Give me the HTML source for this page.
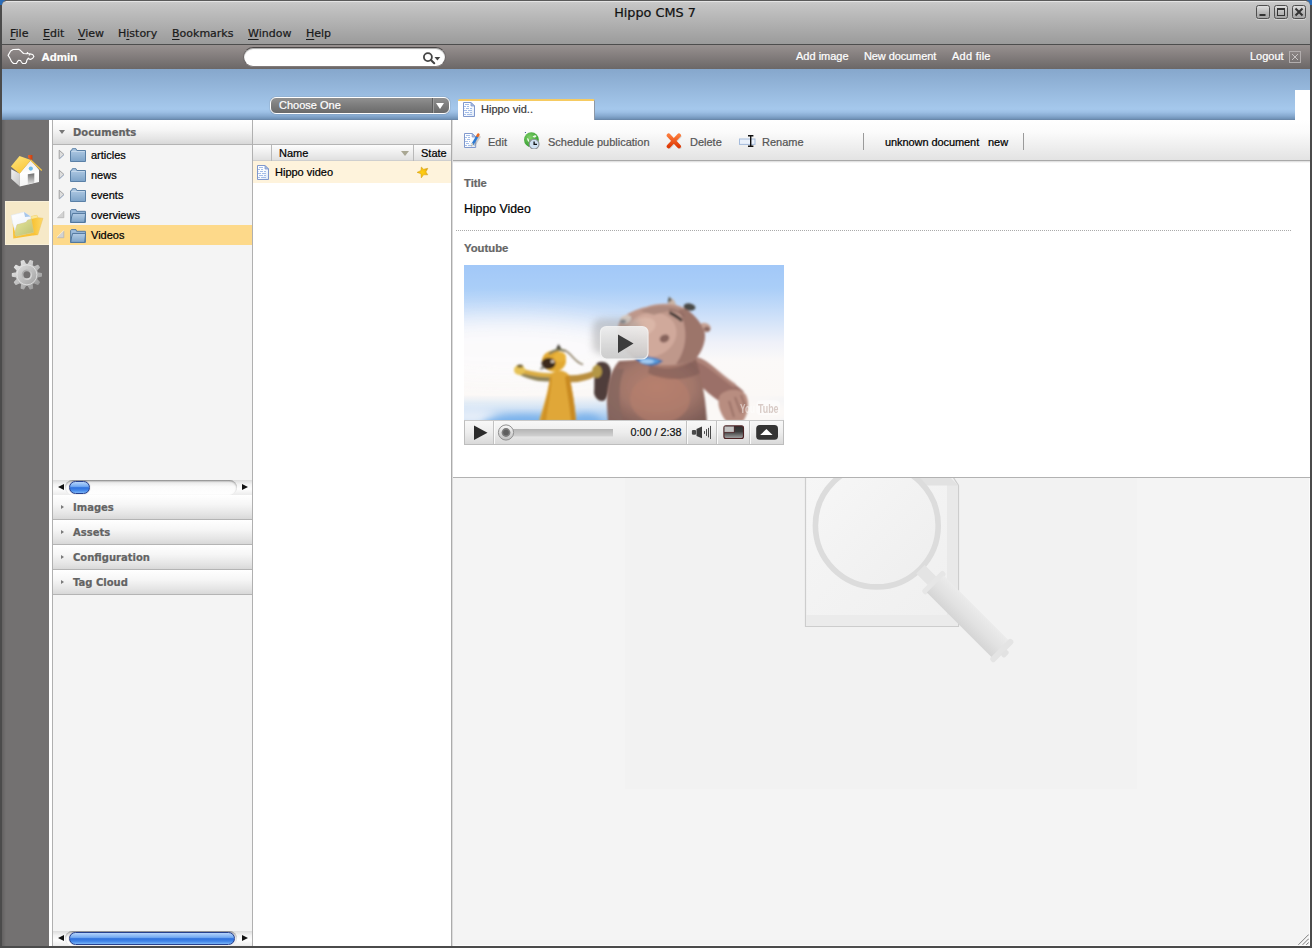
<!DOCTYPE html>
<html>
<head>
<meta charset="utf-8">
<title>Hippo CMS 7</title>
<style>
*{box-sizing:border-box;margin:0;padding:0}
html,body{width:1312px;height:948px;overflow:hidden;background:#4a4a4a}
body{position:relative;font-family:"Liberation Sans",sans-serif;font-size:11px;color:#000}
.abs{position:absolute}
.t{position:absolute;white-space:nowrap;line-height:14px;-webkit-text-stroke:.22px}
#win{position:absolute;left:0;top:0;width:1312px;height:948px;background:#4b4b4b;overflow:hidden}
#corner-l{position:absolute;left:0;top:0;width:5px;height:5px;background:#2a6cb8}
#corner-r{position:absolute;right:0;top:0;width:5px;height:5px;background:#2a6cb8}
#titlebar{position:absolute;left:2px;top:0;width:1308px;height:44px;border-radius:5px 5px 0 0;border-top:1px solid #5a5a5a;background:linear-gradient(#cdcdcd 0,#c4c4c4 4px,#9b9b9b 100%)}
#titlebar .hl{position:absolute;left:4px;right:4px;top:0;height:1px;background:#e4e4e4}
#title{left:-1px;width:1308px;text-align:center;top:4px;font:12.8px "DejaVu Sans",sans-serif;line-height:16px;color:#111}
.menu{font:11px "DejaVu Sans",sans-serif;color:#1a1a1a;top:26px;line-height:14px}
.menu u{text-decoration:underline;text-underline-offset:1.5px;text-decoration-thickness:.8px}
#tbline{position:absolute;left:2px;top:44px;width:1308px;height:1px;background:#4d4d4d}
#toolbar{position:absolute;left:2px;top:45px;width:1308px;height:24px;background:linear-gradient(#989190,#6b6767)}
#toolbar .t{color:#fff;top:4px}
#blue{position:absolute;left:2px;top:69px;width:1308px;height:51px;background:linear-gradient(#86a7cc 0,#a5c8ec 40px,#9dc0e5 43px,#86a9cf 47px,#6f91b6 50px,#66809f 51px)}
#sidebar{position:absolute;left:2px;top:120px;width:47px;height:826px;background:linear-gradient(to right,#636161 0,#6f6d6d 3px,#737171 4px)}
#gap{position:absolute;left:49px;top:120px;width:3px;height:826px;background:#fff}

.hdr{position:absolute;left:53px;width:199px;height:25px;border-bottom:1px solid #b4b4b4;background:linear-gradient(#ffffff 0,#f6f6f6 40%,#e4e4e4 80%,#d8d8d8 100%)}
.hdr .t{left:20px;top:7px;font:bold 10px "DejaVu Sans",sans-serif;line-height:12px;color:#636363}
.hdr .tri{position:absolute;left:8px;top:9.5px;width:0;height:0;border-left:3.5px solid #7a7a7a;border-top:2.7px solid transparent;border-bottom:2.7px solid transparent}
.hdr .trid{position:absolute;left:6px;top:10px;width:0;height:0;border-top:4px solid #777;border-left:3.5px solid transparent;border-right:3.5px solid transparent}
#leftpanel{position:absolute;left:52px;top:120px;width:201px;height:826px;background:#f4f4f4;border-left:1px solid #b0b0b0;border-right:1px solid #b0b0b0}
.row{position:absolute;left:53px;width:199px;height:20px}
.row .t{left:38px;top:3px}
.row svg{position:absolute}
#list{position:absolute;left:253px;top:120px;width:198px;height:826px;background:#fff}
#listhdr{position:absolute;left:0;top:0;width:198px;height:25px;border-bottom:1px solid #b4b4b4;background:linear-gradient(#ffffff 0,#f5f5f5 45%,#e3e3e3 100%)}
#colhdr{position:absolute;left:0;top:25px;width:198px;height:16px;background:linear-gradient(#fdfdfd,#ececec 60%,#e0e0e0);border-bottom:1px solid #cfcfcf}
#colhdr .sep{position:absolute;top:0;width:1px;height:16px;background:#b9b9b9}
#listrow{position:absolute;left:0;top:41px;width:198px;height:22px;background:#fef3dc}
#listborder{position:absolute;left:451px;top:120px;width:1px;height:826px;background:#ababab}
#right{position:absolute;left:452px;top:120px;width:858px;height:826px;background:#f4f4f4;border-left:1px solid #dcdcdc}
#rtool{position:absolute;left:0;top:0;width:857px;height:41px;background:linear-gradient(#ffffff 0,#fbfbfb 30%,#e3e3e3 100%);border-bottom:1px solid #a9a9a9}
#rtool .t{top:15px;color:#555}
#rtool .k{color:#000}
#rtool .vsep{position:absolute;top:13px;width:1px;height:17px;background:#9a9a9a}
#content{position:absolute;left:0;top:41px;width:857px;height:317px;background:linear-gradient(#d8d8d8 0,#fff 2px,#fff 100%);border-bottom:1px solid #b2b2b2}

.wbtn{position:absolute;top:4px;width:14px;height:14px;border:1px solid #4f4f4f;border-radius:2.5px;background:linear-gradient(#dedede,#b8b8b8 55%,#a4a4a4);box-shadow:0 1px 0 rgba(255,255,255,.45)}
.wbtn svg{position:absolute;left:0;top:0}
#search{position:absolute;left:241px;top:1.5px;width:203px;height:20.500px;border-radius:10.500px;background:#fff;border:1px solid #6a6565;border-top-color:#4a4646;border-bottom-color:#807b7b;box-shadow:inset 0 1px 1px rgba(0,0,0,.35)}
#lx{position:absolute;left:1287px;top:6px;width:12px;height:12px;border:1px solid #b2adad}
#dd{position:absolute;left:270px;top:97px;width:180px;height:17px;border:1px solid #fff;border-radius:6px;background:linear-gradient(#909090,#7c7c7c 50%,#6a6a6a);box-shadow:0 0 1px rgba(60,60,60,.8)}
#dd .t{left:8px;top:0px;color:#fff;font-size:11px}
#dd .s{position:absolute;left:161px;top:0;width:1px;height:15px;background:#5e5e5e;border-right:1px solid #9a9a9a;box-sizing:content-box}
#dd .a{position:absolute;left:165px;top:5px;width:0;height:0;border-top:6px solid #fff;border-left:4.5px solid transparent;border-right:4.5px solid transparent}
#tab{position:absolute;left:458px;top:99px;width:137px;height:22px;background:#fff;border-top:2px solid #f6cb62;border-right:1px solid #8d98a6;border-radius:2px 2px 0 0}
#tab .t{left:23px;top:1px;color:#3c3c3c}
#wblock{position:absolute;left:1295px;top:90px;width:15px;height:30px;background:#fff}

.sb{position:absolute;left:53px;width:199px;height:15px;background:linear-gradient(#dcdcdc 0,#f4f4f4 30%,#fdfdfd 60%,#ececec 100%)}
.sb .track{position:absolute;left:12px;top:0;width:172px;height:15px;border-radius:8px;background:linear-gradient(#c9c9c9 0,#ececec 18%,#fbfbfb 45%,#ffffff 100%);box-shadow:inset 0 1px 2px rgba(0,0,0,.35)}
.sb .thumb{position:absolute;top:1px;height:13px;border-radius:7px;border:1px solid #27418f;background:linear-gradient(#b6d4fb 0,#74aaf2 40%,#2f70dd 52%,#4386e8 75%,#79b4f7 100%);box-shadow:0 0 1px rgba(0,0,50,.5)}
.sb .al{position:absolute;left:5px;top:4px;width:0;height:0;border-right:6px solid #111;border-top:3.5px solid transparent;border-bottom:3.5px solid transparent}
.sb .ar{position:absolute;left:189px;top:4px;width:0;height:0;border-left:6px solid #111;border-top:3.5px solid transparent;border-bottom:3.5px solid transparent}
#sel{position:absolute;left:5px;top:201px;width:44px;height:44px;background:#f6e9c8;border:1px solid #f9f0d8;border-right:none}
.ico{position:absolute}

#video{position:absolute;left:11px;top:104px;width:320px;height:155px;overflow:hidden}
#vbar{position:absolute;left:11px;top:259px;width:320px;height:25px;border:1px solid #bdbdbd;border-top:1px solid #c9c9c9;background:linear-gradient(#f8f8f8,#ededed 50%,#d9d9d9)}
#vbar .vs{position:absolute;top:0;width:1px;height:23px;background:#c2c2c2;border-right:1px solid #fafafa;box-sizing:content-box}
#vbar .t{font-size:10.8px;top:4px;left:165.5px;color:#111}
#wm{position:absolute;left:172px;top:358px;width:512px;height:311px;background:#f2f2f2;overflow:hidden}
</style>
</head>
<body>
<div id="win">
<div id="corner-l"></div><div id="corner-r"></div>
<div id="titlebar"><div class="hl"></div>
 <div id="title" class="t">Hippo CMS 7</div>
 <div class="wbtn" style="left:1254px"><svg width="12" height="12" viewBox="0 0 12 12"><rect x="2.5" y="8" width="6" height="2" fill="#333"/></svg></div>
 <div class="wbtn" style="left:1272px"><svg width="12" height="12" viewBox="0 0 12 12"><rect x="2.5" y="2.5" width="7" height="7" fill="none" stroke="#333" stroke-width="1"/><rect x="2" y="2" width="8" height="2" fill="#333"/></svg></div>
 <div class="wbtn" style="left:1290px"><svg width="12" height="12" viewBox="0 0 12 12"><path d="M2.5 2.5 L9.5 9.5 M9.5 2.5 L2.5 9.5" stroke="#333" stroke-width="2"/></svg></div>
 <div class="t menu" style="left:8px"><u>F</u>ile</div>
 <div class="t menu" style="left:41px"><u>E</u>dit</div>
 <div class="t menu" style="left:76px"><u>V</u>iew</div>
 <div class="t menu" style="left:116px">H<u>i</u>story</div>
 <div class="t menu" style="left:170px"><u>B</u>ookmarks</div>
 <div class="t menu" style="left:246px"><u>W</u>indow</div>
 <div class="t menu" style="left:304px"><u>H</u>elp</div>
</div>
<div id="tbline"></div>
<div id="toolbar">
 <svg class="ico" style="left:2px;top:-1px" width="40" height="26" viewBox="0 0 40 26"><path d="M4.1 11.4 L6.6 7.0 L9.1 5.5 L14.6 5.3 L16.6 6.6 L19.5 9.5 L22.9 9.8 L23.5 8.5 L24.1 9.8 L25.9 9.9 L28.7 10.5 L29.9 12.5 L28.7 14.3 L26.5 15.4 L25.0 14.9 L24.4 14.2 L22.9 16.2 L22.4 18.3 L21.3 19.5 L18.6 19.5 L17.4 18.0 L16.5 16.5 L14.6 16.3 L13.4 17.7 L12.5 19.4 L9.5 19.5 L7.6 17.7 L5.8 14.0 Z" fill="none" stroke="#fff" stroke-width="1.15" stroke-linejoin="round"/><path d="M25.9 10 L25.2 11.6" stroke="#fff" stroke-width="1" fill="none"/></svg><div class="t" style="left:39.5px;top:4.5px;font-weight:bold;font-size:11.5px">Admin</div>
 <div class="t" style="left:794px">Add image</div>
 <div class="t" style="left:862px;letter-spacing:-.1px">New document</div>
 <div class="t" style="left:950px;letter-spacing:.25px">Add file</div>
 <div class="t" style="left:1248px">Logout</div>
 <div id="lx"><svg width="10" height="10" viewBox="0 0 10 10" style="position:absolute;left:0;top:0"><path d="M2 2 L8 8 M8 2 L2 8" stroke="#c8c4c4" stroke-width="1"/></svg></div>
 <div id="search"><svg width="24" height="17" viewBox="0 0 24 17" style="position:absolute;left:176px;top:1px"><circle cx="7.900" cy="8.100" r="4" fill="none" stroke="#444" stroke-width="1.800"/><path d="M10.900 11.100 L14.200 14.200" stroke="#444" stroke-width="2.100" stroke-linecap="round"/><path d="M14.500 8.100 L20.300 8.100 L17.400 11.400 Z" fill="#444"/></svg></div>
</div>
<div id="blue"></div>
<div id="wblock"></div>
<div id="dd"><div class="t">Choose One</div><div class="s"></div><div class="a"></div></div>
<div id="tab"><svg class="ico" style="left:5px;top:1px" width="12" height="15" viewBox="0 0 12 15"><path d="M0.5 0.5 L8 0.5 L11.5 4 L11.5 14.5 L0.5 14.5 Z" fill="url(#dg)" stroke="#8098cc" stroke-width="1"/><path d="M8 0.5 L8 4 L11.5 4 Z" fill="#a9c0e6" stroke="#8098cc" stroke-width=".8"/><path d="M2 2.5 H6 M1 4.500 H3 M4 4.500 H6 M1 6.500 H1.500 M3 6.500 H6 M7 6.500 H9 M1 8.500 H4 M5 8.500 H9 M2 10.500 H6 M7 10.500 H9 M1 12.500 H3 M4 12.500 H9" stroke="#a4bde8" stroke-width="1"/></svg><div class="t">Hippo vid..</div></div>
<div id="sidebar"></div><div id="sel"></div><svg class="ico" style="left:0;top:145px" width="56" height="56" viewBox="0 0 56 56"><defs>
<linearGradient id="hr" x1="0" y1="0" x2=".6" y2="1"><stop offset="0" stop-color="#ffe680"/><stop offset="1" stop-color="#f9c63a"/></linearGradient>
<linearGradient id="hl" x1="0" y1="0" x2="1" y2="1"><stop offset="0" stop-color="#f2f2f2"/><stop offset="1" stop-color="#c4c4c4"/></linearGradient>
<linearGradient id="hf" x1="0" y1="0" x2="0" y2="1"><stop offset="0" stop-color="#ececec"/><stop offset=".5" stop-color="#ffffff"/><stop offset="1" stop-color="#f4f4f4"/></linearGradient>
<linearGradient id="hd" x1="0" y1="0" x2="0" y2="1"><stop offset="0" stop-color="#6e6e6e"/><stop offset="1" stop-color="#e2e2e2"/></linearGradient>
<linearGradient id="hc" x1="0" y1="0" x2="1" y2="0"><stop offset="0" stop-color="#f0642a"/><stop offset="1" stop-color="#c93c0c"/></linearGradient>
</defs>
<path d="M28.2 10 L32.4 10 L32.4 15.2 L28.2 13 Z" fill="url(#hc)"/>
<path d="M11.2 24.3 L19.5 28.4 L19.8 41.4 L11.2 33.8 Z" fill="url(#hl)"/>
<path d="M19.5 28.6 L30.7 15.3 L39 24.8 L39 36.9 L19.8 41.4 Z" fill="url(#hf)"/>
<path d="M10.9 21.6 L19.5 10.9 L30.9 15 L19.6 28.8 Z" fill="url(#hr)"/>
<path d="M30.6 15 L41.8 25.6" stroke="#f2c444" stroke-width="1.4" fill="none"/>
<circle cx="30.8" cy="23.6" r="2.1" fill="#6cbcea"/>
<path d="M27.8 29.3 L34.3 28.2 L34.3 37.8 L27.8 39.3 Z" fill="url(#hd)"/>
</svg><svg class="ico" style="left:0;top:197px" width="56" height="56" viewBox="0 0 56 56"><defs>
<linearGradient id="bp" x1="0" y1="0" x2="1" y2="1"><stop offset="0" stop-color="#ffffff"/><stop offset=".6" stop-color="#f4f7fc"/><stop offset="1" stop-color="#c7d8ee"/></linearGradient>
<linearGradient id="bf" x1="0" y1="0" x2="1" y2="1"><stop offset="0" stop-color="#e6e69a"/><stop offset="1" stop-color="#bcc074"/></linearGradient>
<linearGradient id="by" x1="0" y1="0" x2="1" y2="0"><stop offset="0" stop-color="#f7bf2c"/><stop offset="1" stop-color="#fdd866"/></linearGradient>
</defs>
<path d="M30.7 19.6 L36.9 18.3 L37.8 20.7 L42.9 21.3 L37.8 37.8 L33 37.8 Z" fill="url(#by)" stroke="#efc660" stroke-width=".6"/>
<path d="M30.9 19.5 L36.9 18.3 L37.6 20.6 L31.5 22 Z" fill="#f9e79a"/>
<path d="M12.7 26 L13.3 41.6 L37.8 37.8 L33.6 35.4 L16 39.3 Z" fill="#f9c338"/>
<path d="M11.2 18.3 L23.9 15.1 L30.7 19.5 L30.7 23 L26 25.4 L17.1 27.8 L14.8 33.1 L12.9 27 Z" fill="url(#bp)" stroke="#dbe5f2" stroke-width=".5"/>
<path d="M23.9 15.1 L30.7 19.5 L25.1 20.1 Z" fill="#a7c6ea"/>
<path d="M17.1 27.8 L26 25.4 L27.8 23 L31.3 22.4 L33.7 35.4 L16 39.3 L14.8 36.6 Z" fill="url(#bf)" stroke="#d9c987" stroke-width=".6"/>
</svg><svg class="ico" style="left:0;top:247px" width="56" height="56" viewBox="0 0 56 56"><defs>
<linearGradient id="gg" x1="0" y1="0" x2="1" y2="1"><stop offset="0" stop-color="#f0f0f0"/><stop offset="1" stop-color="#8e8e8e"/></linearGradient>
<linearGradient id="gg2" x1="0" y1="0" x2="1" y2="1"><stop offset="0" stop-color="#dcdcdc"/><stop offset="1" stop-color="#a2a2a2"/></linearGradient>
<linearGradient id="gg3" x1="0" y1="0" x2="1" y2="1"><stop offset="0" stop-color="#9c9c9c"/><stop offset="1" stop-color="#e8e8e8"/></linearGradient>
</defs>
<path d="M28.21 17.28 L30.19 13.68 L32.54 14.44 L32.02 18.52 L34.14 20.06 L37.86 18.31 L39.31 20.30 L36.50 23.30 L37.31 25.80 L41.35 26.57 L41.35 29.03 L37.31 29.80 L36.50 32.30 L39.31 35.30 L37.86 37.29 L34.14 35.54 L32.02 37.08 L32.54 41.16 L30.19 41.92 L28.21 38.32 L25.59 38.32 L23.61 41.92 L21.26 41.16 L21.78 37.08 L19.66 35.54 L15.94 37.29 L14.49 35.30 L17.30 32.30 L16.49 29.80 L12.45 29.03 L12.45 26.57 L16.49 25.80 L17.30 23.30 L14.49 20.30 L15.94 18.31 L19.66 20.06 L21.78 18.52 L21.26 14.44 L23.61 13.68 L25.59 17.28 Z" fill="url(#gg)" stroke="url(#gg)" stroke-width="1.3" stroke-linejoin="round"/>
<circle cx="26.9" cy="27.8" r="10" fill="url(#gg2)" stroke="#e6e6e6" stroke-width=".8"/>
<circle cx="26.9" cy="27.8" r="5.2" fill="url(#gg3)"/>
<circle cx="26.9" cy="27.8" r="3.5" fill="#737171"/>
</svg>
<div id="gap"></div>

<div id="leftpanel"></div>
<div class="hdr" style="top:120px"><div class="trid"></div><div class="t">Documents</div></div>
<div class="row" style="top:145px"><svg class="ico" style="left:5px;top:4px" width="8" height="11" viewBox="0 0 8 11"><path d="M1.2 1.2 L6 5.5 L1.2 9.8 Z" fill="#dedede" stroke="#a2a2a2" stroke-width="1"/><path d="M6 5.8 L1.6 10" stroke="#a9c0e2" stroke-width=".8" fill="none"/></svg><svg class="ico" style="left:17px;top:3px" width="16" height="14" viewBox="0 0 16 14"><defs><linearGradient id="fg" x1="0" y1="0" x2="0" y2="1"><stop offset="0" stop-color="#b4cde6"/><stop offset="1" stop-color="#7da3c8"/></linearGradient></defs><path d="M1.5 2.8 L2.3 0.7 L6 0.7 L6.8 2.5 L15.5 2.5 L15.5 13.5 L0.5 13.5 L0.5 2.8 Z" fill="url(#fg)" stroke="#5a80a6" stroke-width="1"/><path d="M1.3 3.5 L14.7 3.5" stroke="#cfe0f0" stroke-width="1" opacity=".7"/></svg><div class="t">articles</div></div>
<div class="row" style="top:165px"><svg class="ico" style="left:5px;top:4px" width="8" height="11" viewBox="0 0 8 11"><path d="M1.2 1.2 L6 5.5 L1.2 9.8 Z" fill="#dedede" stroke="#a2a2a2" stroke-width="1"/><path d="M6 5.8 L1.6 10" stroke="#a9c0e2" stroke-width=".8" fill="none"/></svg><svg class="ico" style="left:17px;top:3px" width="16" height="14" viewBox="0 0 16 14"><defs><linearGradient id="fg" x1="0" y1="0" x2="0" y2="1"><stop offset="0" stop-color="#b4cde6"/><stop offset="1" stop-color="#7da3c8"/></linearGradient></defs><path d="M1.5 2.8 L2.3 0.7 L6 0.7 L6.8 2.5 L15.5 2.5 L15.5 13.5 L0.5 13.5 L0.5 2.8 Z" fill="url(#fg)" stroke="#5a80a6" stroke-width="1"/><path d="M1.3 3.5 L14.7 3.5" stroke="#cfe0f0" stroke-width="1" opacity=".7"/></svg><div class="t">news</div></div>
<div class="row" style="top:185px"><svg class="ico" style="left:5px;top:4px" width="8" height="11" viewBox="0 0 8 11"><path d="M1.2 1.2 L6 5.5 L1.2 9.8 Z" fill="#dedede" stroke="#a2a2a2" stroke-width="1"/><path d="M6 5.8 L1.6 10" stroke="#a9c0e2" stroke-width=".8" fill="none"/></svg><svg class="ico" style="left:17px;top:3px" width="16" height="14" viewBox="0 0 16 14"><defs><linearGradient id="fg" x1="0" y1="0" x2="0" y2="1"><stop offset="0" stop-color="#b4cde6"/><stop offset="1" stop-color="#7da3c8"/></linearGradient></defs><path d="M1.5 2.8 L2.3 0.7 L6 0.7 L6.8 2.5 L15.5 2.5 L15.5 13.5 L0.5 13.5 L0.5 2.8 Z" fill="url(#fg)" stroke="#5a80a6" stroke-width="1"/><path d="M1.3 3.5 L14.7 3.5" stroke="#cfe0f0" stroke-width="1" opacity=".7"/></svg><div class="t">events</div></div>
<div class="row" style="top:205px"><svg class="ico" style="left:3px;top:5px" width="9" height="9" viewBox="0 0 9 9"><path d="M1.2 7.7 L7.8 1.2 L7.8 7.7 Z" fill="#d2d2d2" stroke="#b4b4b4" stroke-width=".8"/><path d="M1 7.4 L7.6 0.9" stroke="#fff" stroke-width=".9" opacity=".9"/></svg><svg class="ico" style="left:17px;top:4px" width="16" height="14" viewBox="0 0 16 14"><path d="M1.3 0.6 L6 0.6 L6.6 2.3 L15.4 2.3 L15.4 13.4 L0.6 13.4 L0.6 1.5 Z" fill="#9dbcdc" stroke="#557ba2" stroke-width="1"/><path d="M2.6 4.4 L15.6 4.4 L14.7 13.4 L0.7 13.4 L1.6 8 Z" fill="url(#fg)" stroke="#4f759c" stroke-width="1"/></svg><div class="t">overviews</div></div>
<div class="row" style="top:225px;background:#fdd98a"><svg class="ico" style="left:3px;top:5px" width="9" height="9" viewBox="0 0 9 9"><path d="M1.2 7.7 L7.8 1.2 L7.8 7.7 Z" fill="#d2d2d2" stroke="#b4b4b4" stroke-width=".8"/><path d="M1 7.4 L7.6 0.9" stroke="#fff" stroke-width=".9" opacity=".9"/></svg><svg class="ico" style="left:17px;top:4px" width="16" height="14" viewBox="0 0 16 14"><path d="M1.3 0.6 L6 0.6 L6.6 2.3 L15.4 2.3 L15.4 13.4 L0.6 13.4 L0.6 1.5 Z" fill="#9dbcdc" stroke="#557ba2" stroke-width="1"/><path d="M2.6 4.4 L15.6 4.4 L14.7 13.4 L0.7 13.4 L1.6 8 Z" fill="url(#fg)" stroke="#4f759c" stroke-width="1"/></svg><div class="t">Videos</div></div>
<div class="hdr" style="top:495px"><div class="tri"></div><div class="t">Images</div></div>
<div class="hdr" style="top:520px"><div class="tri"></div><div class="t">Assets</div></div>
<div class="hdr" style="top:545px"><div class="tri"></div><div class="t">Configuration</div></div>
<div class="hdr" style="top:570px"><div class="tri"></div><div class="t">Tag Cloud</div></div>
<div class="sb" style="top:480px"><div class="track"></div><div class="al"></div><div class="ar"></div><div class="thumb" style="left:16px;width:21px"></div></div>
<div class="sb" style="top:931px"><div class="track"></div><div class="al"></div><div class="ar"></div><div class="thumb" style="left:16px;width:166px"></div></div>
<div id="list">
 <div id="listhdr"></div>
 <div id="colhdr"><div class="abs" style="left:148px;top:6px;width:0;height:0;border-top:5px solid #a9a793;border-left:4.5px solid transparent;border-right:4.5px solid transparent"></div><div class="sep" style="left:18px"></div><div class="sep" style="left:160px"></div>
  <div class="t" style="left:26px;top:1px">Name</div><div class="t" style="left:168px;top:1px">State</div></div>
 <div id="listrow"><svg width="0" height="0" style="position:absolute"><defs><linearGradient id="dg" x1="0" y1="0" x2="1" y2="1"><stop offset="0" stop-color="#ffffff"/><stop offset=".5" stop-color="#fbfdff"/><stop offset="1" stop-color="#dbe7f7"/></linearGradient></defs></svg><svg class="ico" style="left:4px;top:4px" width="12" height="15" viewBox="0 0 12 15"><path d="M0.5 0.5 L8 0.5 L11.5 4 L11.5 14.5 L0.5 14.5 Z" fill="url(#dg)" stroke="#8098cc" stroke-width="1"/><path d="M8 0.5 L8 4 L11.5 4 Z" fill="#a9c0e6" stroke="#8098cc" stroke-width=".8"/><path d="M2 2.5 H6 M1 4.500 H3 M4 4.500 H6 M1 6.500 H1.500 M3 6.500 H6 M7 6.500 H9 M1 8.500 H4 M5 8.500 H9 M2 10.500 H6 M7 10.500 H9 M1 12.500 H3 M4 12.500 H9" stroke="#a4bde8" stroke-width="1"/></svg><svg class="ico" style="left:162px;top:5px" width="14" height="13" viewBox="0 0 14 13"><defs><radialGradient id="sg" cx=".5" cy=".5" r=".55"><stop offset="0" stop-color="#ffcf14"/><stop offset=".55" stop-color="#f7c010"/><stop offset="1" stop-color="#cf9a12"/></radialGradient></defs><path d="M6.3 1 L8.6 3.2 L12.9 2.3 L10.9 5.9 L12.8 8.8 L8.6 8.8 L6.3 11.9 L5.9 7.7 L2 6.4 L5.9 4.5 Z" fill="url(#sg)" stroke="#d9a514" stroke-width=".5"/></svg><div class="t" style="left:22px;top:4px">Hippo video</div></div>
</div>
<div id="listborder"></div>
<div id="right">
 <div id="rtool">
  <svg class="ico" style="left:11px;top:11px" width="17" height="18" viewBox="0 0 17 18"><g transform="translate(0,2)"><path d="M0.5 0.500 L8.200 0.500 L11.700 4 L11.700 14.500 L0.500 14.500 Z" fill="url(#dg)" stroke="#8098cc" stroke-width="1"/><path d="M8.200 0.500 L8.200 4 L11.700 4 Z" fill="#a9c0e6" stroke="#8098cc" stroke-width=".8"/><path d="M2 2.500 H6 M1 4.500 H3 M4 4.500 H6 M1 6.500 H1.500 M3 6.500 H6 M1 8.500 H4 M5 8.500 H6 M2 10.500 H5 M1 12.500 H3 M4 12.500 H7" stroke="#a4bde8" stroke-width="1"/></g><path d="M14.900 4.300 L9 14" stroke="#8e8e8e" stroke-width="2.200" opacity=".4" transform="translate(1.100,.8)"/><path d="M13.500 5.200 L8.500 13.300" stroke="#2a79d2" stroke-width="2.500"/><path d="M14.300 3.700 L13.600 4.900" stroke="#ea6a22" stroke-width="2.700" stroke-linecap="round"/><path d="M9.400 12.300 L7.300 15.300 L7.800 12.200 Z" fill="#ecd6a8"/><path d="M7.900 14.200 L7.100 15.600 L8.400 14.700 Z" fill="#222"/></svg><svg class="ico" style="left:70px;top:11px" width="18" height="18" viewBox="0 0 18 18"><defs><radialGradient id="cg" cx=".4" cy=".35" r=".7"><stop offset="0" stop-color="#7fd06a"/><stop offset="1" stop-color="#2e9a2a"/></radialGradient></defs><circle cx="8.4" cy="8.7" r="7.4" fill="url(#cg)"/><path d="M4 7.5 C5 6.5 6.5 8.5 6 11 C5 10.5 4.2 9 4 7.5 Z M9.5 5.5 C11 4.5 12.5 3.5 13.5 5 C12.5 6.5 11 7.5 9.5 5.5 Z" fill="#eef8ea"/><circle cx="11.1" cy="13.2" r="4.9" fill="#cfe0f1" stroke="#8c8f94" stroke-width="1.1"/><path d="M11.1 10.4 L11.1 13.4 L14 13.4" stroke="#111" stroke-width="1.3" fill="none"/><rect x="1.9" y="1" width="1" height="1" fill="#3a4a9a"/></svg><svg class="ico" style="left:213px;top:13px" width="16" height="16" viewBox="0 0 16 16"><defs><linearGradient id="xg" x1="0" y1="0" x2="0" y2="1"><stop offset="0" stop-color="#fb7a3a"/><stop offset="1" stop-color="#df3a06"/></linearGradient></defs><path d="M2.6 2.4 L13 13.4 M13 2.4 L2.6 13.4" stroke="#c8c8c8" stroke-width="3.6" stroke-linecap="round" transform="translate(.8,.9)" opacity=".7"/><path d="M2.6 2.4 L13 13.4 M13 2.4 L2.6 13.4" stroke="url(#xg)" stroke-width="3.9" stroke-linecap="round"/></svg><svg class="ico" style="left:285px;top:14px" width="18" height="14" viewBox="0 0 18 14"><rect x="1.5" y="5" width="15.5" height="5.4" fill="#eaf1fb" stroke="#a4bbdc" stroke-width="1"/><path d="M10 1.7 H15.4 M12.7 1.7 V12.3 M10 12.3 H15.4" stroke="#111" stroke-width="1.4" fill="none"/></svg><div class="t" style="left:35px">Edit</div>
  <div class="t" style="left:95px">Schedule publication</div>
  <div class="t" style="left:237px">Delete</div>
  <div class="t" style="left:309px">Rename</div>
  <div class="vsep" style="left:410px"></div>
  <div class="t k" style="left:432px;letter-spacing:-.08px">unknown document</div>
  <div class="t k" style="left:535px">new</div>
  <div class="vsep" style="left:570px"></div>
 </div>
 <div id="content">
  <div class="t" style="left:11px;top:15px;font-weight:bold;color:#666;font-size:11.2px">Title</div>
  <div class="t" style="left:11px;top:41px;font-size:12.3px">Hippo Video</div>
  <div class="abs" style="left:3px;top:69px;width:835px;height:0;border-top:1px dotted #aaa"></div>
  <div class="t" style="left:11px;top:80px;font-weight:bold;color:#666;font-size:11.3px">Youtube</div>
<div id="video"><svg width="320" height="155" viewBox="0 0 320 155"><defs>
<linearGradient id="sky" x1="0" y1="0" x2="0" y2="1"><stop offset="0" stop-color="#a2c8f8"/><stop offset=".15" stop-color="#aacef8"/><stop offset=".34" stop-color="#cfe1f9"/><stop offset=".5" stop-color="#eff1f9"/><stop offset=".62" stop-color="#fbf9f8"/><stop offset=".84" stop-color="#fbf8f6"/><stop offset=".92" stop-color="#d2e3f5"/><stop offset="1" stop-color="#9cc4ee"/></linearGradient>
<filter id="b1" x="-20%" y="-20%" width="140%" height="140%"><feGaussianBlur stdDeviation="1"/></filter>
<filter id="b2" x="-20%" y="-20%" width="140%" height="140%"><feGaussianBlur stdDeviation="2.5"/></filter>
<filter id="b3" x="-30%" y="-30%" width="160%" height="160%"><feGaussianBlur stdDeviation="6"/></filter>
<filter id="b5" x="-50%" y="-100%" width="200%" height="300%"><feGaussianBlur stdDeviation="13"/></filter>
<filter id="b4" x="-30%" y="-30%" width="160%" height="160%"><feGaussianBlur stdDeviation="3.5"/></filter>
<radialGradient id="hb" cx=".5" cy=".45" r=".65"><stop offset="0" stop-color="#b5806f"/><stop offset=".55" stop-color="#a3776b"/><stop offset="1" stop-color="#7e5d57"/></radialGradient>
<linearGradient id="pb" x1="0" y1="0" x2="0" y2="1"><stop offset="0" stop-color="#f2f2f2"/><stop offset="1" stop-color="#c9c9c9"/></linearGradient>
<clipPath id="vc"><rect width="320" height="155"/></clipPath>
</defs>
<g clip-path="url(#vc)">
<rect width="320" height="155" fill="url(#sky)"/>
<ellipse cx="40" cy="84" rx="125" ry="30" fill="#fcfbfc" filter="url(#b5)" opacity=".95"/>
<ellipse cx="270" cy="148" rx="70" ry="22" fill="#fbf8f6" filter="url(#b3)"/>
<ellipse cx="8" cy="152" rx="26" ry="8" fill="#eef3fa" filter="url(#b3)"/>
<ellipse cx="62" cy="160" rx="44" ry="10" fill="#7ab2ec" filter="url(#b4)"/>
<ellipse cx="122" cy="158" rx="16" ry="9" fill="#7cb2ea" filter="url(#b4)"/>
<g filter="url(#b1)">
 <!-- hippo far arm (dark) -->
 <path d="M133 98 C139 95 146 98 147 106 C148 116 146 128 141 135 C137 138 131 134 130 128 C131 120 129 108 133 98 Z" fill="#4f3d3a"/>
 <!-- yellow creature -->
 <path d="M55 103 C64 108 76 111 88 110 L89 116 C76 118 64 114 54 109 Z" fill="#8f8358"/>
 <path d="M55 102 C64 106 76 108 88 108 L88 112 C76 113 64 110 54 107 Z" fill="#dcae44"/>
 <path d="M104 110 C112 111 121 109 129 106 L130 112 C122 116 112 118 104 117 Z" fill="#b98e3c"/>
 <ellipse cx="55.500" cy="105" rx="5.500" ry="5" fill="#e6c257"/>
 <ellipse cx="56" cy="101" rx="3" ry="1.500" fill="#6a5a30"/>
 <ellipse cx="133" cy="106.500" rx="5" ry="6.500" fill="#b39645"/>
 <path d="M86 110 C85 124 80 140 75 156 L112 156 C111 140 108 124 105 110 C100 104 91 104 86 110 Z" fill="#e0a737"/>
 <path d="M101 112 C103 128 106 142 107 156 L112 156 C111 140 108 124 105 110 Z" fill="#c98a24"/>
 <path d="M86 112 C85 126 81 140 77 156 L82 156 C84 140 87 126 88 112 Z" fill="#cf9228"/>
 <ellipse cx="90" cy="96" rx="12" ry="10.500" fill="#e2a932"/>
 <ellipse cx="96" cy="92" rx="6" ry="5" fill="#e9b33a"/>
 <ellipse cx="84.500" cy="98.500" rx="7" ry="5.800" fill="#3c2a1c"/>
 <ellipse cx="88.500" cy="96.500" rx="1.800" ry="1.300" fill="#f0e2d0"/>
 <path d="M75.500 104.500 L79 100 L80 104 Z" fill="#8a8478"/>
 <path d="M85 89 C90 85 96 84 101 86" stroke="#7d7a5a" stroke-width="2.200" fill="none"/>
 <path d="M100 85 C108 88 110 97 119 99.500" stroke="#8a7c62" stroke-width="1.600" fill="none"/>
 <path d="M92 84 L94.500 79 L97.500 84 Z" fill="#4a4438"/>
</g>
<g filter="url(#b1)">
 <!-- hippo near arm -->
 <path d="M226 92 C236 90 246 98 256 108 C264 116 274 120 280 127 L262 140 C254 136 246 130 240 124 C234 120 230 114 228 110 Z" fill="#9b7067"/>
 <path d="M234 95 C246 99 256 111 270 120" stroke="#b78c80" stroke-width="4" fill="none" stroke-linecap="round" opacity=".7"/>
 <path d="M256 130 C262 124 276 122 282 130 C286 138 284 150 279 156 L262 156 C256 148 252 138 256 130 Z" fill="#b88d80"/>
 <path d="M265 136 L270 152 M271 132 L277 148 M277 130 L282 143" stroke="#8d645c" stroke-width="1.300" fill="none"/>
 <!-- body -->
 <path d="M155 96 C146 106 142 122 143 140 L144 158 L243 158 C242 140 240 124 236 112 C232 100 226 94 216 92 Z" fill="url(#hb)"/>
 <path d="M150 104 C144 116 143 136 145 158 L160 158 C154 140 154 120 160 104 Z" fill="#86665f" opacity=".8"/>
 <ellipse cx="196" cy="134" rx="30" ry="24" fill="#b8806e" opacity=".55"/>
 <path d="M186 100 C200 106 220 104 232 94 L236 108 C222 116 200 116 184 108 Z" fill="#7c5a54" opacity=".55"/>
 <!-- ears/horns -->
 <path d="M203.500 41 L205 32 L210 35 L213 42 Z" fill="#c9b4a6"/>
 <path d="M203.500 38 L205 31.500 L208 35 Z" fill="#5a5a52"/>
 <ellipse cx="241" cy="62.500" rx="6" ry="4.500" fill="#c6a294" transform="rotate(20 241 62.500)"/>
 <ellipse cx="243" cy="64" rx="3" ry="2.400" fill="#8a665e" transform="rotate(20 243 64)"/>
 <!-- head -->
 <path d="M157 55 C163 48 172 44 182 42 C196 37 212 38 222 44 C232 51 240 61 241 70 C241 80 236 90 230 95 C220 100 204 101 192 100 C182 99 172 96 166 90 C158 84 153 74 154 64 C154 60 155 57 157 55 Z" fill="#bf988b"/>
 <path d="M222 44 C232 51 240 61 241 70 C241 80 236 90 230 95 C224 98 216 99 212 99 C222 86 226 64 214 44 Z" fill="#946b63" opacity=".8"/>
 <ellipse cx="186" cy="70" rx="27" ry="22" fill="#d2ab9c" opacity=".9" transform="rotate(-18 186 70)"/>
 <ellipse cx="178" cy="62" rx="14" ry="9" fill="#dcb9aa" opacity=".8" transform="rotate(-18 178 62)"/>
 <path d="M176 46 C188 40 206 39 218 44 C212 46 200 46 190 50 Z" fill="#a88479" opacity=".8"/>
 <ellipse cx="161.500" cy="54.500" rx="6" ry="4.200" fill="#dccfc6" transform="rotate(-20 161.500 54.500)"/>
 <ellipse cx="159" cy="56.500" rx="3" ry="2" fill="#7d8086"/>
 <ellipse cx="200.500" cy="73.500" rx="5" ry="3.800" fill="#87635c" transform="rotate(-25 200.500 73.500)"/>
 <path d="M206.500 48 C210 50 214 52 217 55" stroke="#3e3432" stroke-width="3" fill="none" stroke-linecap="round"/>
 <path d="M205 45 C210 45 216 47 220 51" stroke="#8a665e" stroke-width="1.500" fill="none"/>
 <ellipse cx="225.500" cy="42" rx="6" ry="3.600" fill="#4a4a46" transform="rotate(10 225.500 42)"/>
 <!-- bow -->
 <path d="M170 92 C176 101 191 104 199 96 C192 92 180 90 170 92 Z" fill="#3f6fa8"/>
 <path d="M172 92.500 C178 99 189 101 196 96 C190 93 180 91.500 172 92.500 Z" fill="#5d9fe0"/>
 <ellipse cx="183" cy="96.500" rx="7" ry="2.200" fill="#a4ccf2"/>
</g>
<!-- play overlay -->
<rect x="128.500" y="53.500" width="48" height="36" rx="9" fill="#8c8c8c" opacity=".38" filter="url(#b4)"/>
<rect x="136.500" y="61.500" width="47.500" height="32.500" rx="6" fill="url(#pb)" opacity=".9" stroke="#f4f4f4" stroke-width="1.200"/>
<path d="M154 69.500 L169.500 78.500 L154 88 Z" fill="#3c3c3c"/>
<!-- youtube watermark -->
<g opacity=".5" filter="url(#b1b)"><rect x="292.500" y="135.500" width="23.500" height="14.500" rx="4" fill="#fff"/><text x="276" y="147.500" font-family="Liberation Sans Narrow, Liberation Sans, sans-serif" font-weight="bold" font-size="13" fill="#fff" textLength="15" lengthAdjust="spacingAndGlyphs">You</text><text x="294" y="147.500" font-family="Liberation Sans Narrow, Liberation Sans, sans-serif" font-weight="bold" font-size="13" fill="#b79f97" textLength="20.500" lengthAdjust="spacingAndGlyphs">Tube</text></g>
</g>
</svg></div>
<div id="vbar">
 <svg class="ico" style="left:0;top:0" width="318" height="23" viewBox="0 0 318 23"><defs>
  <linearGradient id="kn" x1="0" y1="0" x2="0" y2="1"><stop offset="0" stop-color="#fafafa"/><stop offset="1" stop-color="#bdbdbd"/></linearGradient>
  <linearGradient id="fs" x1="0" y1="0" x2="0" y2="1"><stop offset="0" stop-color="#2e2e2e"/><stop offset=".45" stop-color="#3c3c3c"/><stop offset="1" stop-color="#a6a6a6"/></linearGradient>
  <linearGradient id="tr" x1="0" y1="0" x2="0" y2="1"><stop offset="0" stop-color="#b4b4b4"/><stop offset="1" stop-color="#d2d2d2"/></linearGradient></defs>
  <path d="M9 4.5 L22.5 11.7 L9 19 Z" fill="#2b2b2b"/>
  <rect x="44" y="8" width="104" height="7.5" fill="url(#tr)"/>
  <circle cx="41" cy="11.5" r="7.6" fill="url(#kn)" stroke="#8f8f8f" stroke-width="1"/>
  <circle cx="41" cy="11.5" r="4.4" fill="#7c7c7c"/><circle cx="41" cy="11.5" r="2.8" fill="#5e5e5e"/>
  <rect x="226.900" y="8.900" width="4.200" height="4.900" rx="1.200" fill="#4a4a4a"/>
  <path d="M231.500 8.100 L237 5.600 V17.300 L231.500 14.900 Z" fill="#3c3c3c"/>
  <path d="M239.500 10.100 V12.900 M241.500 8.100 V14.900 M243.500 6.900 V16.400 M245.500 4.900 V18" stroke="#4a4a4a" stroke-width="1"/>
  <rect x="258.900" y="4.900" width="19.600" height="12.600" rx="2" fill="url(#fs)" stroke="#4e2224" stroke-width="1.100"/>
  <rect x="259.500" y="5.500" width="9.500" height="5.600" fill="#c4c4c4"/>
  <path d="M259.500 11.400 H269.300 V5.500" stroke="#5a2a2c" stroke-width=".7" fill="none"/>
  <rect x="291.200" y="4.100" width="21.800" height="14.700" rx="3.600" fill="#343434"/>
  <path d="M295.200 14.100 L301.400 8.100 L307.600 14.100 Z" fill="#fff"/>
 </svg>
 <div class="vs" style="left:28px"></div><div class="vs" style="left:221px"></div><div class="vs" style="left:251px"></div><div class="vs" style="left:284px"></div>
 <div class="t">0:00 / 2:38</div>
</div>

 </div>
<div id="wm"><svg width="512" height="311" viewBox="0 0 512 311"><defs>
<linearGradient id="wd" x1="0" y1="0" x2="1" y2="1"><stop offset="0" stop-color="#f6f6f6"/><stop offset="1" stop-color="#efefef"/></linearGradient>
<linearGradient id="wh" x1="0" y1="0" x2="0" y2="1"><stop offset="0" stop-color="#ebebeb"/><stop offset=".5" stop-color="#e2e2e2"/><stop offset="1" stop-color="#d5d5d5"/></linearGradient>
<linearGradient id="wl" x1="0" y1="0" x2="1" y2="1"><stop offset="0" stop-color="#f7f7f7"/><stop offset="1" stop-color="#eeeeee"/></linearGradient>
</defs>
<path d="M180.500 -5 L325.500 -5 L333.500 7.500 L333.500 148.500 L180.500 148.500 Z" fill="url(#wd)" stroke="#cdcdcd" stroke-width="1.2"/>
<rect x="181" y="137" width="152" height="11" fill="#ebebeb"/>
<path d="M322 -5 L322 137 L333 137 L333 8 Z" fill="#e9e9e9"/>
<path d="M287 0 L325.500 0 L333.500 7.500 L292 7.500 L292 3 L287 3 Z" fill="#e2e2e2"/>
<circle cx="251.800" cy="47.500" r="61.400" fill="url(#wl)" stroke="#dcdcdc" stroke-width="5.600"/>
<g transform="translate(295.500,91.200) rotate(45)">
 <rect x="0" y="-6" width="22" height="12" fill="#e4e4e4"/>
 <rect x="16" y="-15" width="6" height="30" rx="2.500" fill="#e6e6e6"/>
 <rect x="21" y="-12" width="92" height="24" fill="url(#wh)" />
 <rect x="112" y="-15" width="6" height="30" rx="2.500" fill="#e4e4e4"/>
 <rect x="117" y="-4" width="5" height="8" rx="2" fill="#e2e2e2"/>
</g>
</svg></div>
</div>
<svg class="ico" style="left:1296px;top:932px" width="14" height="14" viewBox="0 0 14 14"><path d="M2.500 12.800 L12.800 2.500 M6.700 12.800 L12.800 6.700 M10.400 12.800 L12.800 10.400" stroke="#6d6d6d" stroke-width="1" fill="none"/><path d="M3.700 12.800 L12.800 3.700 M7.900 12.800 L12.800 7.900 M11.600 12.800 L12.800 11.600" stroke="#fff" stroke-width=".8" fill="none"/></svg>
<div class="abs" style="left:453px;top:945px;width:857px;height:1px;background:#fcfcfc"></div><div class="abs" style="left:1309px;top:478px;width:1px;height:468px;background:#fcfcfc"></div>
</div>
</body>
</html>
